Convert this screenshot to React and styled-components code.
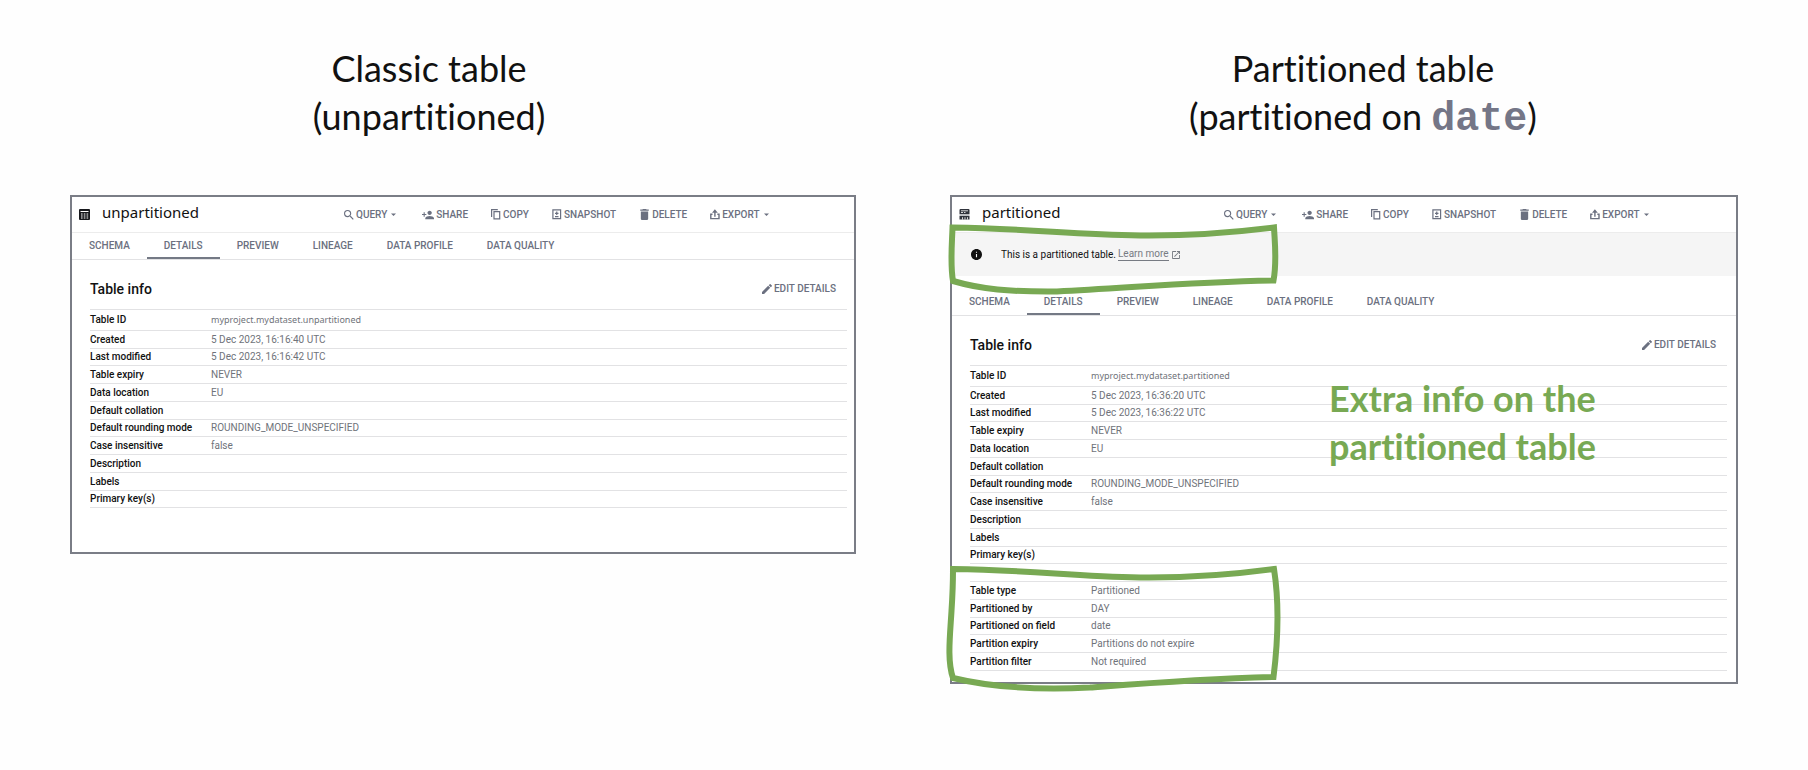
import React from "react";
import styled, { createGlobalStyle } from "styled-components";
import { MdSearch, MdPersonAdd, MdDelete, MdEdit, MdInfo, MdOpenInNew, MdArrowDropDown } from "react-icons/md";

const GREEN = "#78a953";
const SLATE = "#6b7080";

const GlobalStyle = createGlobalStyle`
  * { box-sizing: border-box; }
  body { margin: 0; background: #fefefe; color: #111; font-family: Roboto, "Liberation Sans", sans-serif; font-size: 10px; }
`;

const Page = styled.main`
  display: grid;
  grid-template-columns: 786fr 788fr;
  column-gap: 94px;
  align-items: start;
  padding: 44px 70px 24px;
`;

const Column = styled.section`
  display: flex;
  flex-direction: column;
  gap: 55px;
`;

const Heading = styled.h1`
  margin: 0;
  padding: ${(p) => (p.$side === "left" ? "0 68px 0 0" : "0 0 0 38px")};
  text-align: center;
  font: 400 36px/48px Lato, "Noto Sans", sans-serif;
  font-variant-ligatures: none;
`;

const FieldName = styled.code`
  font: 700 40px/40px "Liberation Mono", monospace;
  color: #747687;
`;

const Panel = styled.article`
  position: relative;
  border: 2px solid #7a7d86;
  padding-bottom: ${(p) => (p.$roomy ? 44 : 11)}px;
  background: #fff;
`;

const Toolbar = styled.header`
  display: flex;
  align-items: center;
  height: 36px;
  padding-left: 7px;
  border-bottom: 1px solid #ececec;
`;

const TitleBlock = styled.div`
  display: flex;
  align-items: center;
  gap: 12px;
  flex: 0 0 265px;
`;

const PanelTitle = styled.h2`
  margin: 0;
  padding-bottom: 6px;
  font: 400 15px/18px "Noto Sans", sans-serif;
`;

const Actions = styled.div`
  display: flex;
  gap: 23px;
`;

const ActionButton = styled.button`
  display: flex;
  align-items: center;
  gap: 2px;
  padding: 0;
  border: 0;
  background: none;
  color: ${SLATE};
  font: 500 10px/12px Roboto, sans-serif;
  white-space: nowrap;
  cursor: pointer;
`;

const MenuArrow = styled(MdArrowDropDown)`
  margin: 0 3px 0 2px;
`;

const Banner = styled.div`
  position: relative;
  display: flex;
  align-items: center;
  gap: 19px;
  height: 43px;
  margin-bottom: 13px;
  padding-left: 19px;
  background: #f5f5f5;
`;

const BannerText = styled.p`
  display: flex;
  align-items: center;
  gap: 2px;
  margin: 0;
  font-size: 10px;
  line-height: 12px;
`;

const LearnMore = styled.a`
  display: flex;
  align-items: center;
  gap: 3px;
  color: #777b83;
  text-decoration: none;

  span { border-bottom: 1px solid #777b83; }
`;

const Tabs = styled.nav`
  display: flex;
  border-bottom: 1px solid #e2e2e4;
`;

const Tab = styled.button`
  padding: 7px 17px 5px;
  border: 0;
  border-bottom: 2px solid ${(p) => (p.$active ? "#747985" : "transparent")};
  background: none;
  color: ${SLATE};
  font: 500 10px/12px Roboto, sans-serif;
  cursor: pointer;
`;

const InfoHeader = styled.div`
  display: flex;
  align-items: center;
  justify-content: space-between;
  padding: 20px ${(p) => p.$inset + 11}px 11px 18px;
`;

const InfoTitle = styled.h3`
  margin: 0;
  font: 500 14px/18px Roboto, sans-serif;
`;

const TableGroup = styled.div`
  position: relative;
  margin: 0 ${(p) => p.$inset}px 0 18px;
  & + & { margin-top: 17px; }
`;

const InfoTable = styled.table`
  width: 100%;
  border-collapse: collapse;
  table-layout: fixed;
  border-top: 1px solid #e2e2e4;
`;

const InfoRow = styled.tr`
  height: ${(p) => (p.$tall ? 21 : 18)}px;
  border-bottom: 1px solid #e2e2e4;
  &:nth-child(4n + 3) { height: 17px; }
`;

const Label = styled.th`
  width: 121px;
  padding: 0;
  text-align: left;
  white-space: nowrap;
  font: 500 10px/12px Roboto, sans-serif;
`;

const Value = styled.td`
  padding: 0;
  color: #6f737a;
  font: ${(p) => (p.$path ? '400 9px/12px "Noto Sans"' : "400 10px/12px Roboto")}, sans-serif;
`;

const Callout = styled.svg`
  position: absolute;
  left: ${(p) => p.$left}px;
  top: ${(p) => p.$top}px;
  z-index: 1;
  overflow: visible;
  pointer-events: none;
  fill: none;
  stroke: ${GREEN};
  stroke-width: 6;
`;

const Note = styled.p`
  position: absolute;
  left: 377px;
  top: 177px;
  margin: 0;
  color: ${GREEN};
  font: 700 36px/48px Lato, "Noto Sans", sans-serif;
  font-variant-ligatures: none;
`;

const TableIcon = () => (
  <svg width="11" height="11" viewBox="0 0 11 11" aria-hidden="true">
    <rect width="11" height="11" rx="1" fill="#17181c" />
    <path d="M1.5 2.5h8M2 5h1.6M4.8 5h1.6M7.6 5h1.6M2 7h1.6M4.8 7h1.6M7.6 7h1.6M2 9h1.6M4.8 9h1.6M7.6 9h1.6" stroke="#fff" strokeWidth="1" />
  </svg>
);

const PartitionedIcon = () => (
  <svg width="11" height="11" viewBox="0 0 11 11" aria-hidden="true">
    <path d="M1.500 0h8q1 0 1 1v4.200H.5V1q0-1 1-1zM.5 7h10v3.500H.5z" fill="#30333c" />
    <path d="M2 1.800h7M2 3.500h2M5 3.500h1.500M3.500 8.200v2.300M6 8.200v2.300M8.500 8.200v2.300" stroke="#fff" strokeWidth=".8" />
    <path d="M.5 6.200h10" stroke="#8a8d96" strokeWidth=".8" />
  </svg>
);

const CopyIcon = () => (
  <svg width="10" height="11" viewBox="0 0 10 11" fill="none" stroke="currentColor" strokeWidth="1.200" aria-hidden="true">
    <path d="M.6 8V.7h6.200M3 2.700h5.700v7.200H3z" />
  </svg>
);

const SnapshotIcon = () => (
  <svg width="10" height="11" viewBox="0 0 10 11" fill="none" stroke="currentColor" strokeWidth="1.200" aria-hidden="true">
    <path d="M.9.9h7.700v8.700H.9zM4.750 2.500v3.600M3 4.300h3.500M3 7.600h3.500" />
  </svg>
);

const ExportIcon = () => (
  <svg width="10" height="11" viewBox="0 0 10 11" fill="none" stroke="currentColor" strokeWidth="1.400" aria-hidden="true">
    <path d="M2.500 5.200H.8v4.400h8.200V5.200H7.300M4.900 7.800V3" />
    <path d="M2 3.800 4.900.3l2.900 3.500z" fill="currentColor" stroke="none" />
  </svg>
);

const ACTIONS = [
  { label: "QUERY", icon: <MdSearch size={10} viewBox="3 3 18 18" />, menu: true },
  { label: "SHARE", icon: <MdPersonAdd size={12} viewBox="1 1 22 22" /> },
  { label: "COPY", icon: <CopyIcon /> },
  { label: "SNAPSHOT", icon: <SnapshotIcon /> },
  { label: "DELETE", icon: <MdDelete size={11} viewBox="3 3 18 18" /> },
  { label: "EXPORT", icon: <ExportIcon />, menu: true },
];

const TABS = ["SCHEMA", "DETAILS", "PREVIEW", "LINEAGE", "DATA PROFILE", "DATA QUALITY"];

const tableInfo = (name, created, modified) => [
  ["Table ID", `myproject.mydataset.${name}`],
  ["Created", created],
  ["Last modified", modified],
  ["Table expiry", "NEVER"],
  ["Data location", "EU"],
  ["Default collation", ""],
  ["Default rounding mode", "ROUNDING_MODE_UNSPECIFIED"],
  ["Case insensitive", "false"],
  ["Description", ""],
  ["Labels", ""],
  ["Primary key(s)", ""],
];

const PARTITION_INFO = [
  ["Table type", "Partitioned"],
  ["Partitioned by", "DAY"],
  ["Partitioned on field", "date"],
  ["Partition expiry", "Partitions do not expire"],
  ["Partition filter", "Not required"],
];

function Details({ rows }) {
  return (
    <InfoTable>
      <tbody>
        {rows.map(([label, value]) => (
          <InfoRow key={label} $tall={label === "Table ID"}>
            <Label scope="row">{label}</Label>
            <Value $path={label === "Table ID"}>{value}</Value>
          </InfoRow>
        ))}
      </tbody>
    </InfoTable>
  );
}

function TablePanel({ name, icon, rows, partitionRows }) {
  const inset = partitionRows ? 9 : 7;
  return (
    <Panel $roomy={!partitionRows}>
      <Toolbar>
        <TitleBlock>
          {icon}
          <PanelTitle>{name}</PanelTitle>
        </TitleBlock>
        <Actions>
          {ACTIONS.map((a) => (
            <ActionButton key={a.label} type="button">
              {a.icon}
              {a.label}
              {a.menu && <MenuArrow size={5} viewBox="7 7 10 10" />}
            </ActionButton>
          ))}
        </Actions>
      </Toolbar>
      {partitionRows && (
        <Banner>
          <MdInfo size={11} viewBox="2 2 20 20" />
          <BannerText>
            This is a partitioned table.
            <LearnMore href="#learn-more">
              <span>Learn more</span>
              <MdOpenInNew size={8} viewBox="3 3 18 18" />
            </LearnMore>
          </BannerText>
          <Callout $left={-2} $top={-9} width="330" height="72" viewBox="0 0 330 72" aria-hidden="true">
            <path d="M2.500 3.500C80 5 120 10 190 11.500C240 12 280 9 324 3.500C325 22 327 38 323.500 56.500C240 58 180 64 107 67.500C60 68 30 65 3 57C0 40 2 20 2.500 3.500Z" />
          </Callout>
        </Banner>
      )}
      <Tabs>
        {TABS.map((t) => (
          <Tab key={t} type="button" $active={t === "DETAILS"}>{t}</Tab>
        ))}
      </Tabs>
      <InfoHeader $inset={inset}>
        <InfoTitle>Table info</InfoTitle>
        <ActionButton type="button">
          <MdEdit size={10} viewBox="3 3 18 18" />
          EDIT DETAILS
        </ActionButton>
      </InfoHeader>
      <TableGroup $inset={inset}>
        <Details rows={rows} />
      </TableGroup>
      {partitionRows && (
        <TableGroup $inset={inset}>
          <Details rows={partitionRows} />
          <Callout $left={-20} $top={-15} width="330" height="126" viewBox="0 0 330 126" aria-hidden="true">
            <path d="M3 3C80 4 120 10 190 11.500C240 12 280 9 324 3C329 35 328 75 323.500 111C250 113 200 117 140 121.500C90 124 40 121 3 112C-3 95 0 70 1.500 45Q3 22 3 3Z" />
          </Callout>
        </TableGroup>
      )}
      {partitionRows && (
        <Note>
          Extra info on the
          <br />
          partitioned table
        </Note>
      )}
    </Panel>
  );
}

export default function App() {
  return (
    <>
      <GlobalStyle />
      <Page>
        <Column>
          <Heading $side="left">
            Classic table
            <br />
            (unpartitioned)
          </Heading>
          <TablePanel
            name="unpartitioned"
            icon={<TableIcon />}
            rows={tableInfo("unpartitioned", "5 Dec 2023, 16:16:40 UTC", "5 Dec 2023, 16:16:42 UTC")}
          />
        </Column>
        <Column>
          <Heading $side="right">
            Partitioned table
            <br />
            (partitioned on <FieldName>date</FieldName>)
          </Heading>
          <TablePanel
            name="partitioned"
            icon={<PartitionedIcon />}
            rows={tableInfo("partitioned", "5 Dec 2023, 16:36:20 UTC", "5 Dec 2023, 16:36:22 UTC")}
            partitionRows={PARTITION_INFO}
          />
        </Column>
      </Page>
    </>
  );
}
